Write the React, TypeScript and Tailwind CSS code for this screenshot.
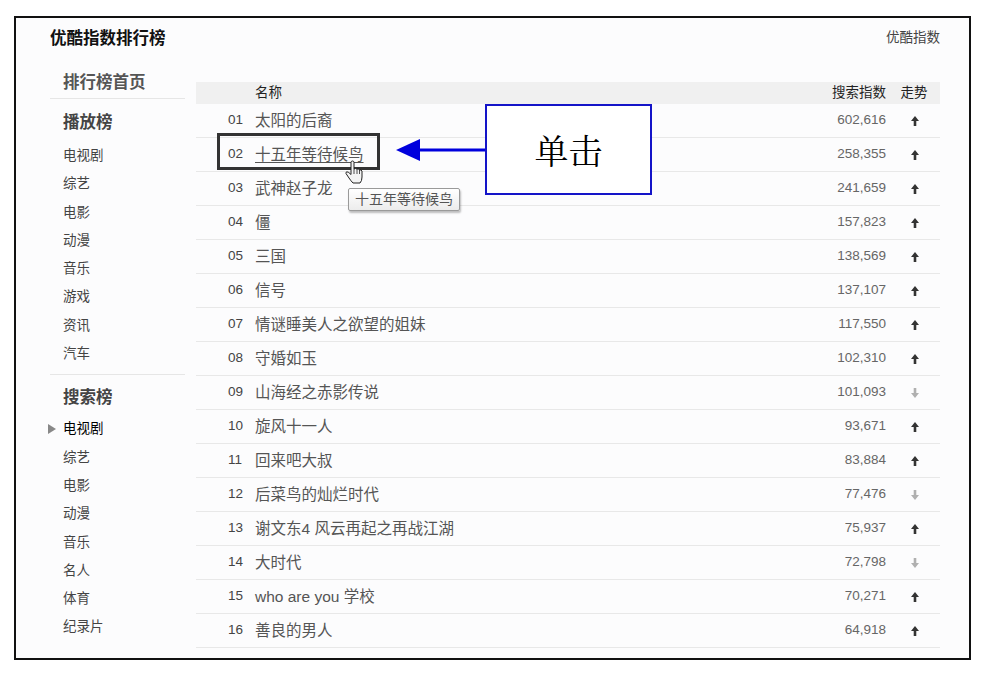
import React from 'react';

const font = { fontFamily: '"Liberation Sans", Arial, "Noto Sans CJK SC", sans-serif' };

type Row = { no: string; name: string; value: string; up: boolean };

const rows: Row[] = [
  { no: '01', name: '太阳的后裔', value: '602,616', up: true },
  { no: '02', name: '十五年等待候鸟', value: '258,355', up: true },
  { no: '03', name: '武神赵子龙', value: '241,659', up: true },
  { no: '04', name: '僵', value: '157,823', up: true },
  { no: '05', name: '三国', value: '138,569', up: true },
  { no: '06', name: '信号', value: '137,107', up: true },
  { no: '07', name: '情谜睡美人之欲望的姐妹', value: '117,550', up: true },
  { no: '08', name: '守婚如玉', value: '102,310', up: true },
  { no: '09', name: '山海经之赤影传说', value: '101,093', up: false },
  { no: '10', name: '旋风十一人', value: '93,671', up: true },
  { no: '11', name: '回来吧大叔', value: '83,884', up: true },
  { no: '12', name: '后菜鸟的灿烂时代', value: '77,476', up: false },
  { no: '13', name: '谢文东4 风云再起之再战江湖', value: '75,937', up: true },
  { no: '14', name: '大时代', value: '72,798', up: false },
  { no: '15', name: 'who are you 学校', value: '70,271', up: true },
  { no: '16', name: '善良的男人', value: '64,918', up: true },
];

const playList = ['电视剧', '综艺', '电影', '动漫', '音乐', '游戏', '资讯', '汽车'];
const searchList = ['电视剧', '综艺', '电影', '动漫', '音乐', '名人', '体育', '纪录片'];

const Trend = ({ up }: { up: boolean }) => (
  <svg width="8" height="10" viewBox="0 0 8 10" className={up ? 'text-[#333]' : 'text-[#b0b0b0]'}>
    {up ? (
      <path d="M4 0 L8 5 L5.3 5 L5.3 10 L2.7 10 L2.7 5 L0 5 Z" fill="currentColor" />
    ) : (
      <path d="M4 10 L8 5 L5.3 5 L5.3 0 L2.7 0 L2.7 5 L0 5 Z" fill="currentColor" />
    )}
  </svg>
);

const SideItem = ({ label, active }: { label: string; active?: boolean }) => (
  <li className={`relative h-[28.3px] leading-[28.3px] pl-[13px] text-[13.5px] ${active ? 'text-black' : 'text-[#444]'}`}>
    {active && (
      <span className="absolute left-[-2px] top-[9px] w-0 h-0 border-y-[5px] border-y-transparent border-l-[8px] border-l-[#888]" />
    )}
    {label}
  </li>
);

export default function App() {
  return (
    <div className="w-[1001px] h-[681px] bg-white pt-[16px] pl-[14px]" style={font}>
      <div className="relative w-[957px] h-[644px] border-2 border-[#111] bg-[#fcfcfd]">
        {/* top bar */}
        <div className="flex items-center justify-between pl-[34px] pr-[29px] pt-[4px] h-[36px]">
          <h1 className="text-[16.5px] font-bold text-[#111]">优酷指数排行榜</h1>
          <span className="text-[13.5px] text-[#444]">优酷指数</span>
        </div>

        <div className="flex pl-[34px] pt-[16px] gap-[11px]">
          {/* sidebar */}
          <aside className="w-[135px]">
            <div className="pl-[13px] h-[29px] leading-[24px] border-b border-[#e6e6e6] text-[16.5px] font-bold text-[#555]">
              排行榜首页
            </div>
            <div className="pl-[13px] mt-[11px] mb-[8px] leading-[24px] text-[16.5px] font-bold text-[#444]">播放榜</div>
            <ul>
              {playList.map((s) => (
                <SideItem key={s} label={s} />
              ))}
            </ul>
            <div className="mt-[6px] border-b border-[#e6e6e6]" />
            <div className="pl-[13px] mt-[10px] mb-[6px] leading-[24px] text-[16.5px] font-bold text-[#444]">搜索榜</div>
            <ul>
              {searchList.map((s, i) => (
                <SideItem key={s + i} label={s} active={i === 0} />
              ))}
            </ul>
          </aside>

          {/* table */}
          <section className="w-[744px] mt-[12px]">
            <div className="flex items-center h-[22px] bg-[#f0f0f0] text-[13.5px] text-[#222]">
              <span className="pl-[59px] flex-1">名称</span>
              <span className="text-right">搜索指数</span>
              <span className="w-[54px] text-center pl-[2px]">走势</span>
            </div>
            {rows.map((r) => (
              <div key={r.no} className="flex items-center h-[34px] border-b border-[#e8e8e8]">
                <span className="pl-[32px] w-[59px] text-[13.5px] text-[#444]">{r.no}</span>
                <span className={`flex-1 text-[15.5px] text-[#555] ${r.no === '02' ? 'underline underline-offset-2 text-[#444]' : ''}`}>
                  {r.name}
                </span>
                <span className="text-right text-[13.5px] text-[#666]">{r.value}</span>
                <span className="w-[54px] flex justify-center pl-[4px]">
                  <Trend up={r.up} />
                </span>
              </div>
            ))}
          </section>
        </div>

        {/* annotation: highlight box */}
        <div className="absolute left-[201px] top-[115px] w-[163px] h-[37px] border-[3px] border-[#333]" />

        {/* annotation: arrow */}
        <svg className="absolute left-[380px] top-[120px]" width="92" height="24" viewBox="0 0 92 24">
          <path d="M0 12 L24 1 L24 23 Z" fill="#0000dd" />
          <rect x="22" y="10.5" width="70" height="3" fill="#0000dd" />
        </svg>

        {/* annotation: callout */}
        <div
          className="absolute left-[469px] top-[86px] w-[167px] h-[91px] border-2 border-[#1414c8] bg-white flex items-center justify-center text-[34px] text-black"
          style={{ fontFamily: '"Noto Serif CJK SC", "Liberation Serif", "Noto Sans CJK SC", serif' }}
        >
          单击
        </div>

        {/* hand cursor */}
        <svg className="absolute left-[327px] top-[142px]" width="24" height="26" viewBox="0 0 24 26">
          <path
            d="M8 2.5 Q8 1 9.5 1 Q11 1 11 2.5 L11 9 Q12.5 8 14 9 Q15.5 8.5 16.5 10 Q18 9.5 19 11 L19 17 Q19 21 17 23 L10 23 Q8 21 6 18 L3 13.5 Q2.5 12 4 11.8 Q5.5 11.8 8 14.5 Z"
            fill="#f4f4f4"
            stroke="#222"
            strokeWidth="1"
          />
          <path d="M11 9 L11 14 M14 9 L14 14 M16.5 10 L16.5 14" stroke="#222" strokeWidth="0.8" fill="none" />
        </svg>

        {/* tooltip */}
        <div className="absolute left-[332px] top-[170px] h-[23px] px-[6px] flex items-center border border-[#9a9a9a] rounded-[2px] bg-gradient-to-b from-white to-[#ececec] shadow-[1px_2px_2px_rgba(0,0,0,0.25)] text-[14px] text-[#555]">
          十五年等待候鸟
        </div>
      </div>
    </div>
  );
}
